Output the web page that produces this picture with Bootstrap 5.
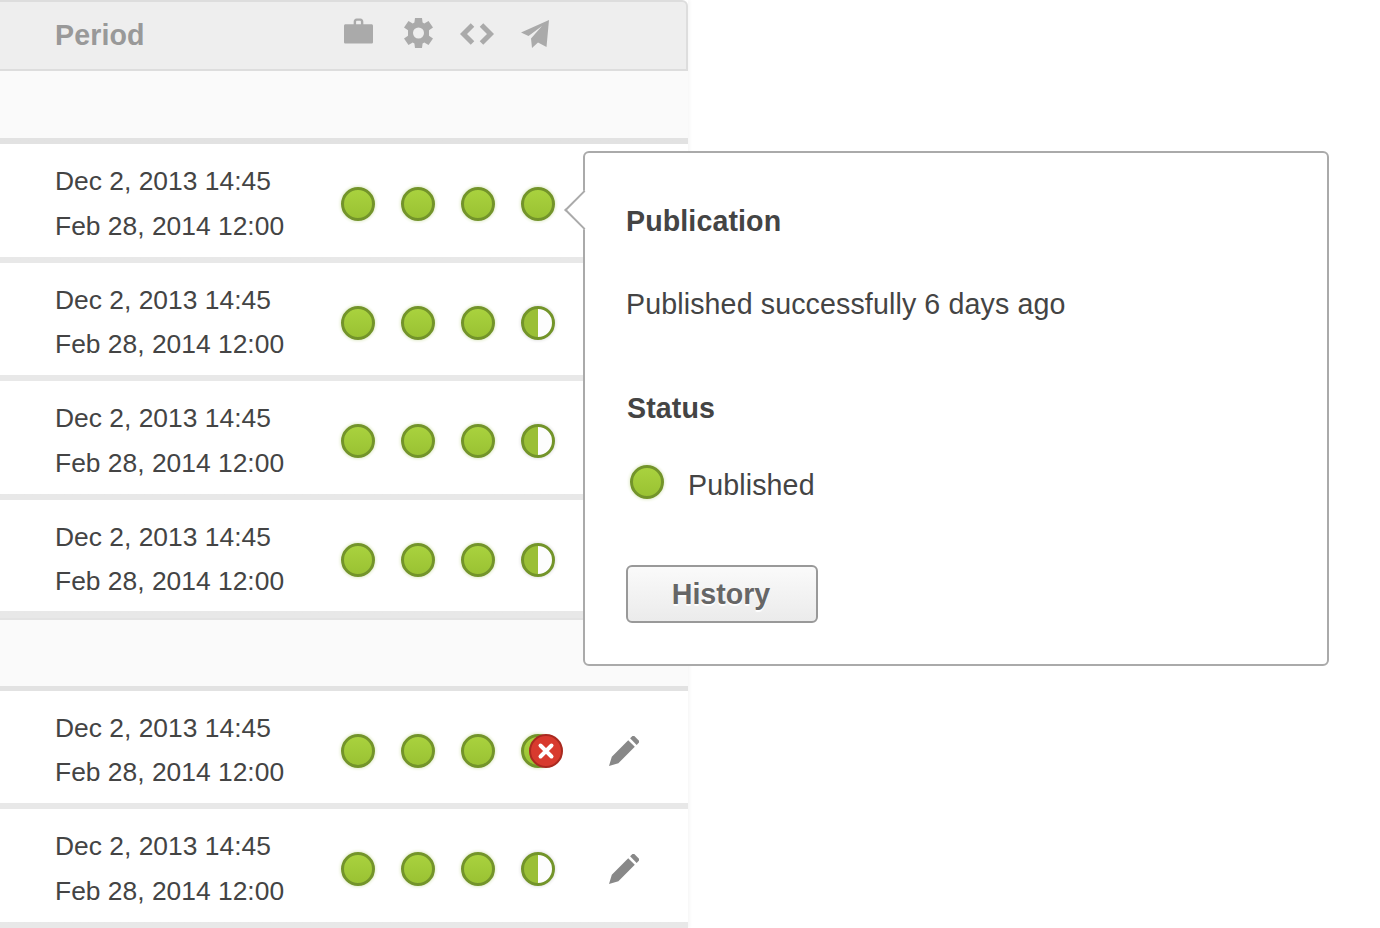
<!DOCTYPE html>
<html lang="en"><head><meta charset="utf-8"><title>Period</title>
<link rel="stylesheet" href="https://cdn.jsdelivr.net/npm/bootstrap@5.3.0/dist/css/bootstrap.min.css">
<style>
html,body{margin:0;height:928px;overflow:hidden;background:#fff}
body{font-family:"Liberation Sans",Arial,sans-serif;color:#444}
.sheet{width:688px;position:relative;box-shadow:2px 0 3px rgba(0,0,0,.035)}
.head-bar{height:71px;background:#eee;border:solid #ddd;border-width:2px 2px 2px 0;border-top-right-radius:6px;padding-left:55px;font-size:28.6px;font-weight:700;color:#999}
.head-label{width:286px;line-height:1;letter-spacing:.1px}
.slots{gap:26px}
.slot{width:34px;height:34px}
.slot svg{display:block;flex:none}
.ico-bag{margin-top:-1px;margin-left:1px}
.ico-gear{margin-top:-1px}
.ico-code{margin-top:4px;margin-left:-2px}
.ico-plane{margin-top:1px;margin-left:-6px}
.band{height:73px;background:#fafafa;border-bottom:6px solid #e3e3e3;border-image:linear-gradient(#f2f2f2,#e0e0e0 35%,#e2e2e2) 1}
.band.second{height:72.7px;border-bottom-width:5px;background:linear-gradient(#e3e3e3 2px,#fafafa 2px)}
.entry{height:118.5px;background:#fff;border-bottom:6px solid #e6e6e6;border-image:linear-gradient(#f2f2f2,#e6e6e6 50%,#e8e8e8) 1;padding:15px 0 0 55px;font-size:26.4px;line-height:44.5px}
.entry.deep{border-bottom-width:7px}
.dates{width:286px;flex:none;letter-spacing:.01px}
.dots-row{margin-top:28px}
.dot{width:34px;height:34px;border-radius:50%;border:3px solid #73942a;background:linear-gradient(#a9d23e,#9ac233);box-shadow:0 0 3px 1px #e4edcf;flex:none;position:relative}
.dot.half{background:linear-gradient(90deg,#9abf36 50%,#fdfdfd 50%);box-shadow:0 0 3px 1px #e6e6e6}
.fail{position:absolute;left:5px;top:-3px;width:34px;height:34px;border-radius:50%;background:#d83a2e;border:2.5px solid #a92a20;display:flex;align-items:center;justify-content:center}
.pen{margin-left:28px;margin-top:2px}
.pop-box{position:absolute;left:583px;top:151px;width:746px;height:515px;background:#fff;border:2px solid #aaa;border-radius:6px;padding:0 0 0 41px;font-size:28.6px;line-height:34px;color:#444;z-index:2;letter-spacing:.12px}
.tip{position:absolute;left:-15px;top:43px;width:28px;height:28px;background:#fff;border:solid #aaa;border-width:0 0 2px 2px;transform:rotate(45deg)}
.pop-h{font-size:28.6px;font-weight:700;margin:0;color:#444;line-height:34px;letter-spacing:.1px}
.h-one{padding-top:51px}
.p-one{padding-top:49px}
.h-two{padding-top:70px;padding-left:1px}
.stat{margin-top:36.5px;gap:24px;padding-left:4px}
.stat span{margin-top:6px}
.hist{margin-top:63.5px;width:192px;height:58px;border:2px solid #999;border-radius:6px;background:linear-gradient(#fafafa,#ebebeb);font-size:28.6px;font-weight:700;color:#666;line-height:44px;padding:0 2px 0 0;text-shadow:0 2px 1px #fff}
.hist:hover{border-color:#999;color:#666}
</style></head><body>
<div class="sheet">
  <div class="head-bar d-flex align-items-center">
    <div class="head-label">Period</div>
    <div class="d-flex slots">
      <div class="slot d-flex justify-content-center"><svg class="ico-bag" width="29" height="27" viewBox="0 0 30 27"><path fill="#aaa" d="M10 6V3.200C10 1.400 11.200 0 13 0h4c1.800 0 3 1.400 3 3.200V6h8.500c.8 0 1.500.7 1.500 1.500v17c0 .8-.7 1.500-1.500 1.500H1.500C.7 26 0 25.300 0 24.500v-17C0 6.700.7 6 1.500 6zM12.500 6h5V3.400c0-.5-.3-.9-.8-.9h-3.400c-.5 0-.8.4-.8.9z"/></svg></div>
      <div class="slot d-flex justify-content-center"><svg class="ico-gear" width="29" height="30" viewBox="0 0 29 30"><path fill="#aaa" fill-rule="evenodd" d="M11 0h7l.6 4.500 1.700.9L24.500 3 29 9.500l-4 2.800v5.400l4 2.800L24.500 27l-4.200-2.400-1.700.9L18 30h-7l-.6-4.500-1.700-.9L4.500 27 0 20.500l4-2.800v-5.400L0 9.500 4.500 3l4.200 2.400 1.700-.9zM14.500 9.500a5.500 5.500 0 1 0 0 11 5.500 5.500 0 0 0 0-11z"/></svg></div>
      <div class="slot d-flex justify-content-center"><svg class="ico-code" width="34" height="22" viewBox="0 0 34 22"><path fill="none" stroke="#aaa" stroke-width="5" d="M12.500 2 3.500 11l9 9M21.500 2l9 9-9 9"/></svg></div>
      <div class="slot d-flex justify-content-center"><svg class="ico-plane" width="28" height="28" viewBox="0 0 28 28"><path fill="#aaa" d="M28 0 25.500 27 17 22.500 11 28 10 18.500 21 6 7.500 16 0 12.500z"/></svg></div>
    </div>
  </div>
  <div class="band"></div>

  <div class="entry d-flex align-items-start"><div class="dates">Dec 2, 2013 14:45<br>Feb 28, 2014 12:00</div><div class="d-flex slots dots-row"><div class="dot"></div><div class="dot"></div><div class="dot"></div><div class="dot"></div></div></div>
  <div class="entry d-flex align-items-start"><div class="dates">Dec 2, 2013 14:45<br>Feb 28, 2014 12:00</div><div class="d-flex slots dots-row"><div class="dot"></div><div class="dot"></div><div class="dot"></div><div class="dot half"></div></div></div>
  <div class="entry d-flex align-items-start"><div class="dates">Dec 2, 2013 14:45<br>Feb 28, 2014 12:00</div><div class="d-flex slots dots-row"><div class="dot"></div><div class="dot"></div><div class="dot"></div><div class="dot half"></div></div></div>
  <div class="entry deep d-flex align-items-start"><div class="dates">Dec 2, 2013 14:45<br>Feb 28, 2014 12:00</div><div class="d-flex slots dots-row"><div class="dot"></div><div class="dot"></div><div class="dot"></div><div class="dot half"></div></div></div>
  <div class="band second"></div>
  <div class="entry d-flex align-items-start"><div class="dates">Dec 2, 2013 14:45<br>Feb 28, 2014 12:00</div><div class="d-flex slots dots-row"><div class="dot"></div><div class="dot"></div><div class="dot"></div><div class="dot"><div class="fail"><svg width="18" height="18" viewBox="0 0 18 18"><path stroke="#fff" stroke-width="4" stroke-linecap="round" d="M3.500 3.500l11 11M14.500 3.500l-11 11"/></svg></div></div><svg class="pen" width="30" height="30" viewBox="0 0 32 32"><path fill="#888" d="M0 32 3 22 20.500 4.500 27.500 11.500 10 29zM22.500 2.500 25 0a1.500 1.500 0 0 1 2 0l5 5a1.500 1.500 0 0 1 0 2l-2.500 2.500z"/></svg></div></div>
  <div class="entry d-flex align-items-start"><div class="dates">Dec 2, 2013 14:45<br>Feb 28, 2014 12:00</div><div class="d-flex slots dots-row"><div class="dot"></div><div class="dot"></div><div class="dot"></div><div class="dot half"></div><svg class="pen" width="30" height="30" viewBox="0 0 32 32"><path fill="#888" d="M0 32 3 22 20.500 4.500 27.500 11.500 10 29zM22.500 2.500 25 0a1.500 1.500 0 0 1 2 0l5 5a1.500 1.500 0 0 1 0 2l-2.500 2.500z"/></svg></div></div>

  <div class="pop-box">
    <div class="tip"></div>
    <div class="h-one"><h3 class="pop-h">Publication</h3></div>
    <div class="p-one">Published successfully 6 days ago</div>
    <div class="h-two"><h3 class="pop-h">Status</h3></div>
    <div class="d-flex align-items-center stat"><div class="dot"></div><span>Published</span></div>
    <button type="button" class="btn hist d-block text-center">History</button>
  </div>
</div>
</body></html>
